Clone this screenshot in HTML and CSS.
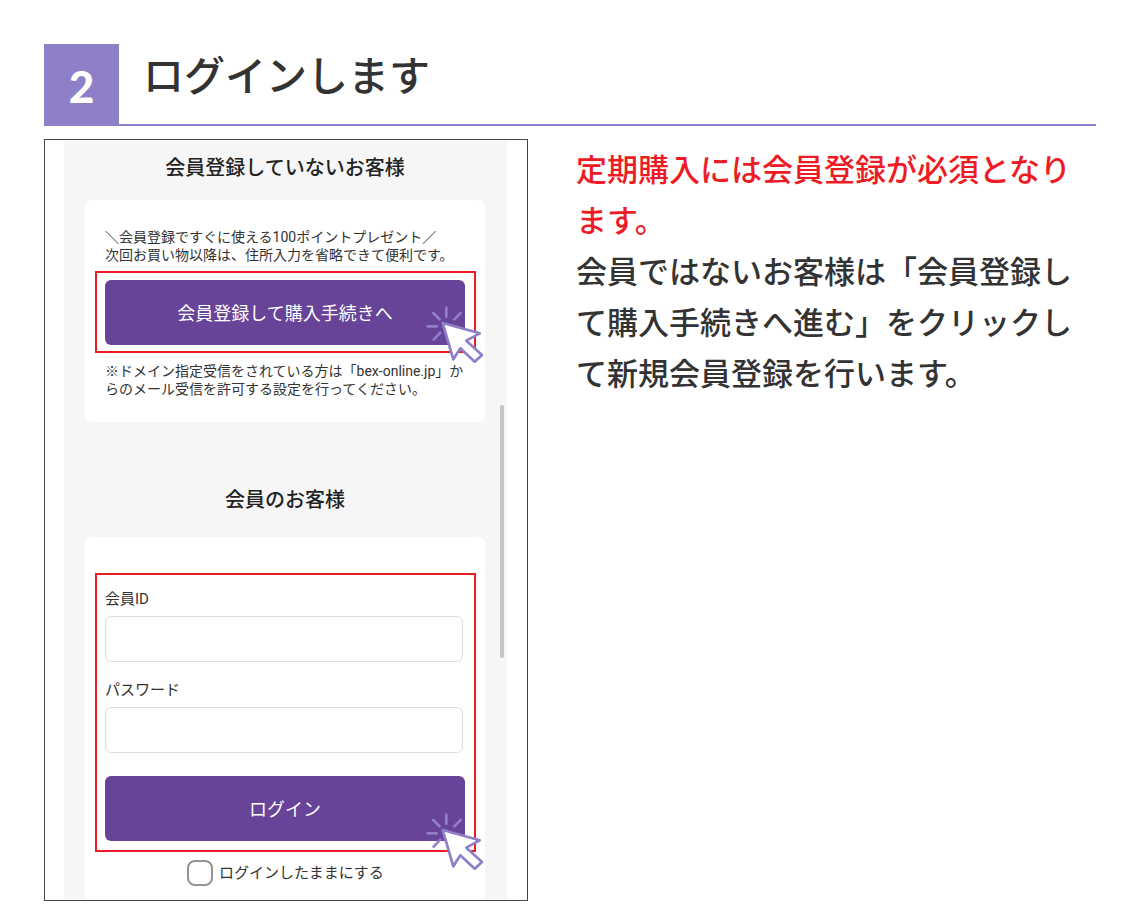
FILE: index.html
```html
<!DOCTYPE html>
<html lang="ja">
<head>
<meta charset="utf-8">
<meta name="viewport" content="width=device-width, initial-scale=1">
<title>ログインします</title>
<link rel="stylesheet" href="styles.css">
</head>
<body>
<svg class="symbols" aria-hidden="true">
  <symbol id="click" viewBox="46 42 180 180">
    <path d="M110 53V80M71 69L90 88M153 69L134 88M54 109H81M92 128L72 149" fill="none" stroke="#8f7fc9" stroke-width="8" stroke-linecap="round"/>
    <path d="M99 99L210 130L170 152L217 195L195 215L152 175L131 208Z" fill="#fff" stroke="#8f7fc9" stroke-width="8" stroke-linejoin="round"/>
  </symbol>
</svg>
<main class="step">
  <header class="step-head">
    <span class="step-number">2</span>
    <h1 class="step-title">ログインします</h1>
  </header>
  <div class="step-body">
    <section class="phone">
      <div class="screen">
        <h2 class="screen-title">会員登録していないお客様</h2>
        <div class="card card-register">
          <p class="note">＼会員登録ですぐに使える100ポイントプレゼント／<br>次回お買い物以降は、住所入力を省略できて便利です。</p>
          <div class="marked">
            <button class="button" type="button">会員登録して購入手続きへ</button>
            <svg class="pointer" aria-hidden="true"><use href="#click"/></svg>
          </div>
          <p class="note">※ドメイン指定受信をされている方は「bex-online.jp」か<br>らのメール受信を許可する設定を行ってください。</p>
        </div>
        <h2 class="screen-title screen-title-member">会員のお客様</h2>
        <form class="card card-login">
          <div class="marked marked-form">
            <label class="label" for="member-id">会員ID</label>
            <input class="input" id="member-id" type="text">
            <label class="label" for="password">パスワード</label>
            <input class="input" id="password" type="password">
            <button class="button" type="button">ログイン</button>
            <svg class="pointer pointer-low" aria-hidden="true"><use href="#click"/></svg>
          </div>
          <label class="keep"><input class="check" type="checkbox">ログインしたままにする</label>
        </form>
        <div class="scrollbar"></div>
      </div>
    </section>
    <section class="guide">
      <p class="text required">定期購入には会員登録が必須となります。</p>
      <p class="text">会員ではないお客様は「会員登録して購入手続きへ進む」をクリックして新規会員登録を行います。</p>
    </section>
  </div>
</main>
</body>
</html>
```

FILE: styles.css
```css
* {
  box-sizing: border-box;
}

body {
  margin: 0;
  background: #fff;
  color: #333;
  font-family: Roboto, "Noto Sans CJK JP", sans-serif;
}

h1,
h2,
p {
  margin: 0;
}

.symbols {
  position: absolute;
  width: 0;
  height: 0;
}

.step {
  padding: 44px 44px 16px;
}

.step-head {
  display: flex;
  gap: 24px;
  border-bottom: 2px solid #8f7fc9;
}

.step-number {
  display: grid;
  place-items: center;
  width: 75px;
  height: 80px;
  padding-top: 4px;
  background: #8f7fc9;
  color: #fff;
  font: 900 44px/48px Lato, sans-serif;
}

.step-title {
  font-size: 41px;
  font-weight: 500;
  line-height: 66px;
}

.step-body {
  display: grid;
  grid-template-columns: 46% 1fr;
  gap: 48px;
  padding-top: 13px;
}

.phone {
  padding: 0 20px 0 19px;
  border: 1px solid #444;
}

.screen {
  position: relative;
  padding: 10px 22px 0 21px;
  background: #f6f6f6;
}

.screen-title {
  margin-bottom: 14px;
  color: #222;
  font-size: 20px;
  font-weight: 500;
  line-height: 36px;
  text-align: center;
}

.screen-title-member {
  margin-top: 60px;
  margin-bottom: 19px;
}

.card {
  padding: 0 9px 0 10px;
  background: #fff;
  border-radius: 6px;
}

.card-register {
  padding-top: 28px;
  padding-bottom: 24px;
}

.card-login {
  padding-top: 36px;
  padding-bottom: 14px;
  border-radius: 6px 6px 0 0;
}

.note {
  padding-left: 10px;
  font-size: 14px;
  line-height: 18px;
  white-space: nowrap;
}

.marked {
  position: relative;
  margin: 7px 0 9px;
  padding: 7px 9px 6px 8px;
  border: 2px solid #ed1c24;
}

.marked-form {
  margin: 0 0 8px;
  padding: 14px 9px 9px 8px;
}

.button {
  display: block;
  width: 100%;
  height: 65px;
  padding: 2px 0 0;
  border: 0;
  border-radius: 6px;
  background: #674497;
  color: #fff;
  font: 400 18px/24px Roboto, "Noto Sans CJK JP", sans-serif;
}

.pointer {
  position: absolute;
  right: -11px;
  bottom: -13px;
  width: 60px;
  height: 60px;
}

.pointer-low {
  bottom: -21px;
}

.label {
  display: block;
  font-size: 15px;
  line-height: 20px;
  margin-bottom: 7px;
}

.input {
  display: block;
  width: calc(100% - 2px);
  height: 46px;
  margin-bottom: 18px;
  padding: 0 12px;
  border: 1px solid #ddd;
  border-radius: 6px;
  background: #fff;
  font: 400 15px/20px Roboto, "Noto Sans CJK JP", sans-serif;
}

.input + .button {
  margin-top: 23px;
}

.keep {
  display: flex;
  justify-content: center;
  align-items: center;
  gap: 6px;
  font-size: 15px;
  line-height: 26px;
}

.check {
  appearance: none;
  width: 26px;
  height: 26px;
  margin: 0;
  border: 2px solid #939393;
  border-radius: 8px;
  background: #fff;
}

.check:checked {
  background: #674497;
}

.scrollbar {
  position: absolute;
  top: 265px;
  right: 3px;
  width: 4px;
  height: 253px;
  border-radius: 2px;
  background: #c4c4c4;
}

.text {
  font-size: 31px;
  font-weight: 500;
  line-height: 51px;
}

.required {
  color: #ed1c24;
}

.guide {
  padding-top: 6px;
}
```
